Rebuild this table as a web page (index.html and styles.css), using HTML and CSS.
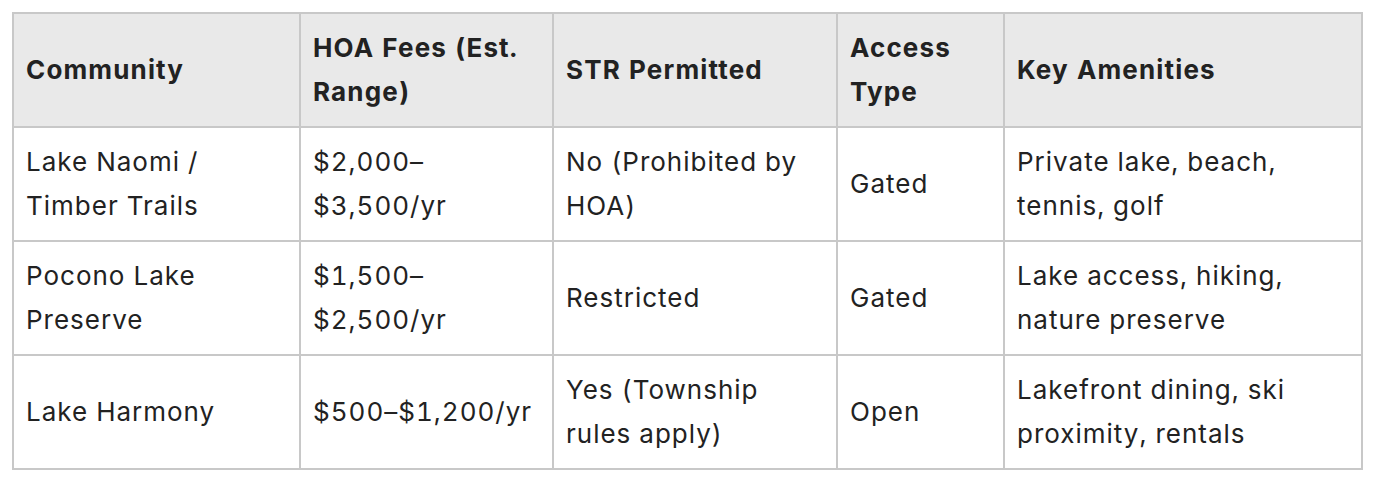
FILE: index.html
```html
<!DOCTYPE html>
<html>
<head>
<meta charset="utf-8">
<link rel="stylesheet" href="styles.css">
</head>
<body>
<table class="grid">
  <colgroup>
    <col class="c1"><col class="c2"><col class="c3"><col class="c4"><col class="c5">
  </colgroup>
  <thead>
    <tr>
      <th>Community</th>
      <th>HOA Fees (Est. Range)</th>
      <th>STR Permitted</th>
      <th>Access Type</th>
      <th>Key Amenities</th>
    </tr>
  </thead>
  <tbody>
    <tr>
      <td>Lake Naomi / Timber Trails</td>
      <td>$2,000–$3,500/yr</td>
      <td>No (Prohibited by HOA)</td>
      <td>Gated</td>
      <td>Private lake, beach, tennis, golf</td>
    </tr>
    <tr>
      <td>Pocono Lake Preserve</td>
      <td>$1,500–$2,500/yr</td>
      <td>Restricted</td>
      <td>Gated</td>
      <td>Lake access, hiking, nature preserve</td>
    </tr>
    <tr>
      <td>Lake Harmony</td>
      <td>$500–$1,200/yr</td>
      <td>Yes (Township rules apply)</td>
      <td>Open</td>
      <td>Lakefront dining, ski proximity, rentals</td>
    </tr>
  </tbody>
</table>
</body>
</html>
```
FILE: styles.css
```css
html, body {
  margin: 0;
  padding: 0;
  background: #ffffff;
}
body {
  padding: 12px;
  font-family: Inter, "Liberation Sans", sans-serif;
  color: #222222;
}
.grid {
  border-collapse: collapse;
  table-layout: fixed;
  width: 1349px;
  border: 2px solid #c8c8c8;
}
.c1 { width: 287px; }
.c2 { width: 253px; }
.c3 { width: 284px; }
.c4 { width: 167px; }
.c5 { width: 358px; }
.grid th, .grid td {
  border: 2px solid #c8c8c8;
  padding: 12px 12px;
  font-size: 26px;
  line-height: 44px;
  letter-spacing: 1px;
  font-variant-numeric: tabular-nums;
  text-align: left;
  vertical-align: middle;
  height: 88px;
  box-sizing: content-box;
}
.grid th {
  background: #e9e9e9;
  font-weight: 700;
  letter-spacing: 1.15px;
}
.grid td {
  font-weight: 400;
}
```
